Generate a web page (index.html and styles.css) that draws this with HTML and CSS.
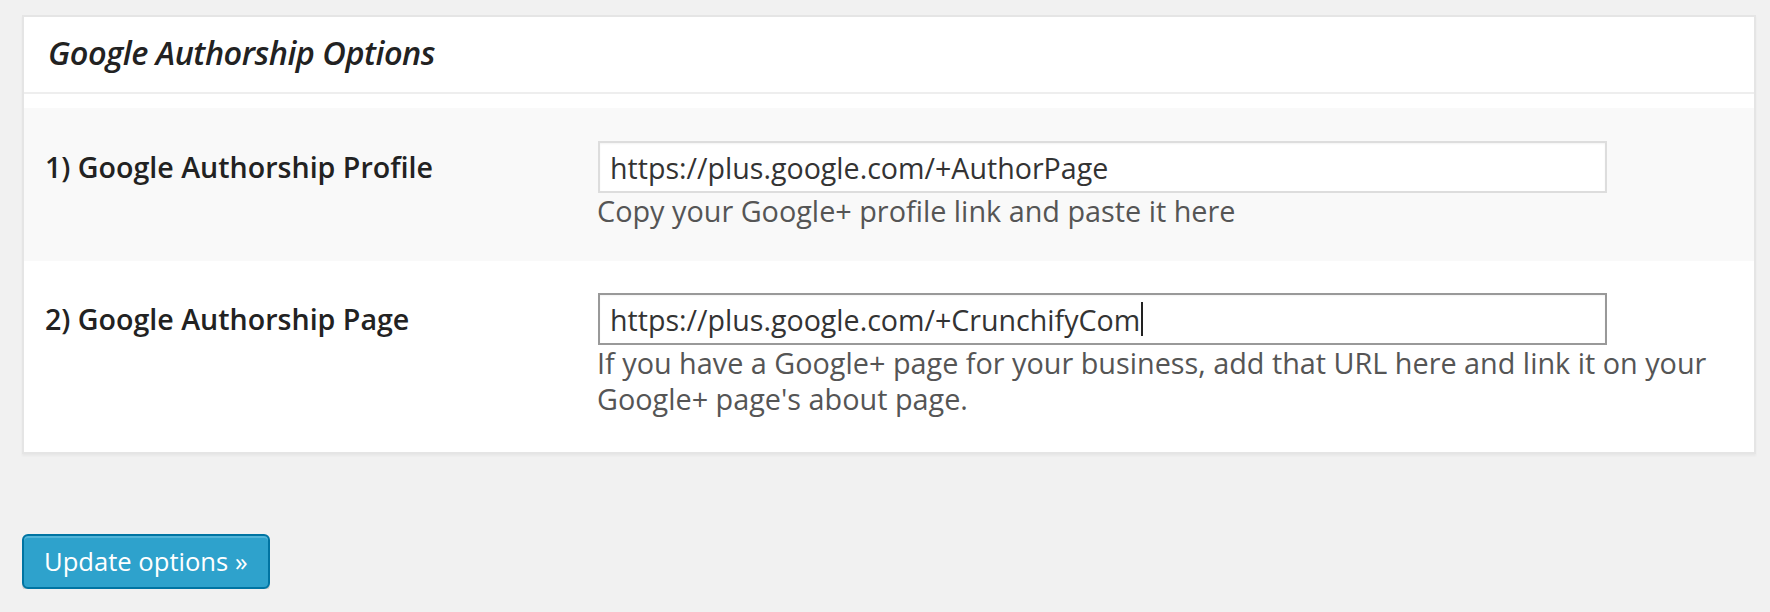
FILE: index.html
```html
<!DOCTYPE html>
<html lang="en">
<head>
<meta charset="utf-8">
<title>Google Authorship Options</title>
<link rel="stylesheet" href="styles.css">
</head>
<body>
<div class="card">
  <div class="card-header">
    <h3 class="card-title">Google Authorship Options</h3>
  </div>
  <div class="rows">
    <div class="row row-alt">
      <div class="label">1) Google Authorship Profile</div>
      <div class="control">
        <div class="field" role="textbox"><span class="value">https://plus.google.com/+AuthorPage</span></div>
        <p class="description">Copy your Google+ profile link and paste it here</p>
      </div>
    </div>
    <div class="row">
      <div class="label">2) Google Authorship Page</div>
      <div class="control">
        <div class="field field-focus" role="textbox"><span class="value">https://plus.google.com/+CrunchifyCom</span><span class="caret"></span></div>
        <p class="description">If you have a Google+ page for your business, add that URL here and link it on your Google+ page's about page.</p>
      </div>
    </div>
  </div>
</div>
<button class="btn-primary" type="button">Update options »</button>
</body>
</html>
```
FILE: styles.css
```css
html, body {
  margin: 0;
}
body {
  background: #f1f1f1;
  font-family: "Open Sans", "Liberation Sans", sans-serif;
  color: #222;
  padding: 15px 14px 0 22px;
}
.card {
  background: #fff;
  border: 2px solid #e5e5e5;
  box-shadow: 0 2px 2px rgba(0, 0, 0, 0.04);
}
.card-header {
  height: 77px;
  box-sizing: border-box;
  padding: 16px 24px 0;
  border-bottom: 2px solid #eeeeee;
}
.card-title {
  margin: 0;
  font-size: 32.5px;
  line-height: 40px;
  font-style: italic;
  font-weight: 600;
  letter-spacing: -0.5px;
  color: #222;
}
.rows {
  padding-top: 14px;
}
.row {
  display: grid;
  grid-template-columns: 574px 1fr;
  padding: 33px 0 32px;
}
.row + .row {
  padding-top: 32px;
  padding-bottom: 35px;
}
.row-alt {
  background: #f9f9f9;
}
.label {
  padding: 8px 0 0 21px;
  font-size: 28.6px;
  line-height: 36px;
  font-weight: 600;
  color: #222;
}
.field {
  width: 1009px;
  height: 52px;
  box-sizing: border-box;
  border: 2px solid #dddddd;
  background: #fff;
  padding: 0 10px;
  display: flex;
  align-items: center;
  font-size: 28.6px;
  color: #333;
  box-shadow: inset 0 1px 2px rgba(0, 0, 0, 0.05);
}
.field-focus {
  border-color: #999999;
}
.caret {
  display: inline-block;
  width: 2px;
  height: 34px;
  background: #222;
  margin-left: 1px;
}
.description {
  margin: 0 0 0 -1px;
  font-size: 28.8px;
  line-height: 36px;
  color: #555;
  max-width: 1140px;
}
.btn-primary {
  margin-top: 80px;
  display: block;
  height: 55px;
  box-sizing: border-box;
  padding: 0 20px;
  border: 2px solid #0074a2;
  border-radius: 6px;
  background: #2ea2cc;
  color: #fff;
  font-family: "Open Sans", "Liberation Sans", sans-serif;
  font-size: 25.6px;
  line-height: 51px;
  box-shadow: inset 0 2px 0 rgba(120, 200, 230, 0.5), 0 2px 0 rgba(0, 0, 0, 0.15);
  cursor: pointer;
}
```
